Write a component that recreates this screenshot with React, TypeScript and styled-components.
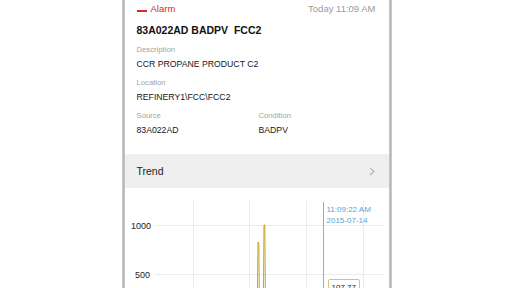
import styled, { createGlobalStyle } from "styled-components";

const GlobalStyle = createGlobalStyle`
  html, body {
    margin: 0;
    padding: 0;
    background: #ffffff;
    font-family: "Liberation Sans", Arial, sans-serif;
  }
`;

interface Field {
  label: string;
  value: string;
}

const Page = styled.div`
  width: 512px;
  height: 288px;
  overflow: hidden;
  display: flex;
  justify-content: center;
  background: #ffffff;
`;

const Frame = styled.div`
  width: 270px;
  margin-left: 1px;
  height: 288px;
  padding: 0 3px;
  box-sizing: border-box;
  background: linear-gradient(
    90deg,
    #d6d6d6 0px,
    #a9a9a9 2px,
    #e4e4e4 3px,
    #e4e4e4 calc(100% - 3px),
    #a9a9a9 calc(100% - 2px),
    #d6d6d6 100%
  );
`;

const Screen = styled.div`
  height: 100%;
  background: #ffffff;
  display: flex;
  flex-direction: column;
  overflow: hidden;
`;

const Details = styled.div`
  flex-shrink: 0;
  padding: 0 12px;
  display: flex;
  flex-direction: column;
`;

const AlarmRow = styled.div`
  display: flex;
  align-items: center;
  justify-content: space-between;
  height: 17px;
  font-size: 9.5px;
`;

const AlarmTag = styled.span`
  display: flex;
  align-items: center;
  gap: 4px;
  color: #d9262c;
  &::before {
    content: "";
    width: 10px;
    height: 2.5px;
    margin-top: 5px;
    background: #d9262c;
  }
`;

const Time = styled.span`
  color: #9a9a9a;
  margin-right: 1px;
`;

const Title = styled.div`
  margin-top: 6px;
  font-size: 10.5px;
  line-height: 14px;
  font-weight: bold;
  color: #111111;
  white-space: pre;
`;

const FieldGrid = styled.div<{ columns: number }>`
  display: grid;
  grid-template-columns: ${(p) => (p.columns > 1 ? `repeat(${p.columns}, 122px)` : "1fr")};
  margin-top: 8px;
`;

const FieldLabel = styled.div`
  font-size: 7.7px;
  color: #a3a3a3;
  line-height: 10px;
`;

const FieldValue = styled.div`
  font-size: 8.7px;
  color: #161616;
  line-height: 12px;
  margin-top: 3px;
  white-space: nowrap;
`;

const TrendRow = styled.div`
  flex-shrink: 0;
  margin-top: 18px;
  height: 34px;
  background: #efefef;
  display: flex;
  align-items: center;
  justify-content: space-between;
  padding: 0 14px 0 12px;
  font-size: 10.5px;
  color: #222222;
`;

const Chevron = styled.svg`
  width: 6px;
  height: 9px;
`;

const ChartArea = styled.div`
  position: relative;
  flex-shrink: 0;
  height: 100px;
`;

const Chart = styled.svg`
  display: block;
`;

const Cursor = styled.div`
  position: absolute;
  left: 202px;
  top: 16px;
  font-size: 8px;
  line-height: 11px;
  color: #5c9fd1;
`;

const ValueBadge = styled.div`
  position: absolute;
  left: 203px;
  top: 91px;
  padding: 2px 3px 0 3px;
  font-size: 8px;
  line-height: 11px;
  color: #222222;
  border: 1px solid #d6c27a;
  border-radius: 2px;
  background: #ffffff;
`;

const fields: Field[][] = [
  [{ label: "Description", value: "CCR PROPANE PRODUCT C2" }],
  [{ label: "Location", value: "REFINERY1\\FCC\\FCC2" }],
  [
    { label: "Source", value: "83A022AD" },
    { label: "Condition", value: "BADPV" },
  ],
];

const TrendChart = () => {
  const vx = [68.5, 124.5, 181.5, 238.5];
  return (
    <Chart width="263" height="100" viewBox="0 0 263 100">
      {vx.map((x) => (
        <line key={x} x1={x} y1="13" x2={x} y2="100" stroke="#ececec" strokeWidth="1" />
      ))}
      <line x1="30" y1="37.5" x2="258" y2="37.5" stroke="#ececec" strokeWidth="1" />
      <line x1="30" y1="86.5" x2="258" y2="86.5" stroke="#ececec" strokeWidth="1" />
      <text x="6" y="40.5" fontSize="9" fill="#222" fontFamily="Liberation Sans, sans-serif">1000</text>
      <text x="10" y="89.5" fontSize="9" fill="#222" fontFamily="Liberation Sans, sans-serif">500</text>
      <path d="M132.5 100 L133 54 L133.8 56 L134.3 100" fill="none" stroke="#c9a227" strokeWidth="1" />
      <path d="M138.5 100 L139 37 L139.8 37 L140.3 100" fill="none" stroke="#c9a227" strokeWidth="1" />
      <line x1="198.5" y1="14" x2="198.5" y2="100" stroke="#7fb3dc" strokeWidth="1" />
    </Chart>
  );
};

export default function App() {
  return (
    <Page>
      <GlobalStyle />
      <Frame>
        <Screen>
          <Details>
            <AlarmRow>
              <AlarmTag>Alarm</AlarmTag>
              <Time>Today 11:09 AM</Time>
            </AlarmRow>
            <Title>{"83A022AD BADPV  FCC2"}</Title>
            {fields.map((row, i) => (
              <FieldGrid key={i} columns={row.length}>
                {row.map((f) => (
                  <div key={f.label}>
                    <FieldLabel>{f.label}</FieldLabel>
                    <FieldValue>{f.value}</FieldValue>
                  </div>
                ))}
              </FieldGrid>
            ))}
          </Details>
          <TrendRow>
            <span>Trend</span>
            <Chevron viewBox="0 0 6 9">
              <path d="M1 0.8 L4.8 4.5 L1 8.2" fill="none" stroke="#b0b0b0" strokeWidth="1.1" />
            </Chevron>
          </TrendRow>
          <ChartArea>
            <TrendChart />
            <Cursor>
              11:09:22 AM
              <br />
              2015-07-14
            </Cursor>
            <ValueBadge>107.77</ValueBadge>
          </ChartArea>
        </Screen>
      </Frame>
    </Page>
  );
}
